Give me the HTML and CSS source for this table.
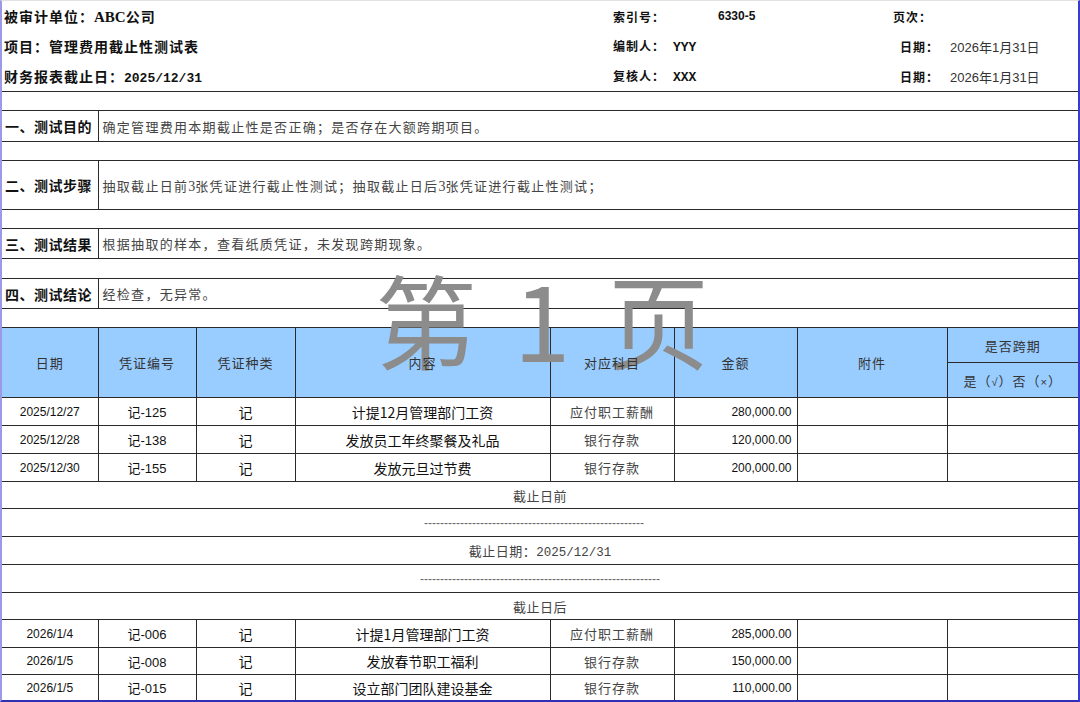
FILE: index.html
```html
<!DOCTYPE html>
<html lang="zh-CN">
<head>
<meta charset="utf-8">
<title>管理费用截止性测试表</title>
<link rel="stylesheet" href="styles.css">
</head>
<body>
<div class="sheet">
  <header class="meta">
    <div class="m-left">被审计单位：<span class="lat">ABC</span>公司</div>
    <div class="m-lab">索引号：</div>
    <div class="m-idx">6330-5</div>
    <div class="m-lab">页次：</div>
    <div></div>

    <div class="m-left">项目：管理费用截止性测试表</div>
    <div class="m-lab span2">编制人：<span class="mono">YYY</span></div>
    <div class="m-lab m-lab-d">日期：</div>
    <div class="m-date">2026年1月31日</div>

    <div class="m-left">财务报表截止日：<span class="mono">2025/12/31</span></div>
    <div class="m-lab span2">复核人：<span class="mono">XXX</span></div>
    <div class="m-lab m-lab-d">日期：</div>
    <div class="m-date">2026年1月31日</div>
  </header>

  <table class="grid">
    <colgroup>
      <col class="c1"><col class="c2"><col class="c3"><col class="c4">
      <col class="c5"><col class="c6"><col class="c7"><col class="c8">
    </colgroup>
    <tbody>
      <tr class="gap r19"><td colspan="8"></td></tr>
      <tr class="sec r31"><th class="sec-lab">一、测试目的</th><td colspan="7" class="sec-txt">确定管理费用本期截止性是否正确；是否存在大额跨期项目。</td></tr>
      <tr class="gap r19"><td colspan="8"></td></tr>
      <tr class="sec r49"><th class="sec-lab">二、测试步骤</th><td colspan="7" class="sec-txt">抽取截止日前<span class="num">3</span>张凭证进行截止性测试；抽取截止日后<span class="num">3</span>张凭证进行截止性测试；</td></tr>
      <tr class="gap r19"><td colspan="8"></td></tr>
      <tr class="sec r30"><th class="sec-lab">三、测试结果</th><td colspan="7" class="sec-txt">根据抽取的样本，查看纸质凭证，未发现跨期现象。</td></tr>
      <tr class="gap r20"><td colspan="8"></td></tr>
      <tr class="sec r30"><th class="sec-lab">四、测试结论</th><td colspan="7" class="sec-txt">经检查，无异常。</td></tr>
      <tr class="gap r19"><td colspan="8"></td></tr>

      <tr class="head r35">
        <th rowspan="2"><span class="ht">日期</span></th>
        <th rowspan="2"><span class="ht">凭证编号</span></th>
        <th rowspan="2"><span class="ht">凭证种类</span></th>
        <th rowspan="2"><span class="ht">内容</span></th>
        <th rowspan="2"><span class="ht">对应科目</span></th>
        <th rowspan="2"><span class="ht">金额</span></th>
        <th rowspan="2"><span class="ht">附件</span></th>
        <th><span class="ht">是否跨期</span></th>
      </tr>
      <tr class="head r35"><th><span class="ht">是（<span class="chk">√</span>）否（<span class="chk">×</span>）</span></th></tr>

      <tr class="data r28">
        <td class="d-date">2025/12/27</td><td class="d-no">记-125</td><td class="d-kind">记</td>
        <td class="d-text">计提12月管理部门工资</td><td class="d-acct">应付职工薪酬</td>
        <td class="d-amt">280,000.00</td><td></td><td></td>
      </tr>
      <tr class="data r28">
        <td class="d-date">2025/12/28</td><td class="d-no">记-138</td><td class="d-kind">记</td>
        <td class="d-text">发放员工年终聚餐及礼品</td><td class="d-acct">银行存款</td>
        <td class="d-amt">120,000.00</td><td></td><td></td>
      </tr>
      <tr class="data r28">
        <td class="d-date">2025/12/30</td><td class="d-no">记-155</td><td class="d-kind">记</td>
        <td class="d-text">发放元旦过节费</td><td class="d-acct">银行存款</td>
        <td class="d-amt">200,000.00</td><td></td><td></td>
      </tr>

      <tr class="mid r27"><td colspan="8">截止日前</td></tr>
      <tr class="mid dash r28"><td colspan="8">-------------------------------------------------------</td></tr>
      <tr class="mid r28"><td colspan="8">截止日期：<span class="mono-n">2025/12/31</span></td></tr>
      <tr class="mid dash dash2 r28"><td colspan="8">------------------------------------------------------------</td></tr>
      <tr class="mid r27"><td colspan="8">截止日后</td></tr>

      <tr class="data r28">
        <td class="d-date">2026/1/4</td><td class="d-no">记-006</td><td class="d-kind">记</td>
        <td class="d-text">计提1月管理部门工资</td><td class="d-acct">应付职工薪酬</td>
        <td class="d-amt">285,000.00</td><td></td><td></td>
      </tr>
      <tr class="data r27">
        <td class="d-date">2026/1/5</td><td class="d-no">记-008</td><td class="d-kind">记</td>
        <td class="d-text">发放春节职工福利</td><td class="d-acct">银行存款</td>
        <td class="d-amt">150,000.00</td><td></td><td></td>
      </tr>
      <tr class="data r26">
        <td class="d-date">2026/1/5</td><td class="d-no">记-015</td><td class="d-kind">记</td>
        <td class="d-text">设立部门团队建设基金</td><td class="d-acct">银行存款</td>
        <td class="d-amt">110,000.00</td><td></td><td></td>
      </tr>
    </tbody>
  </table>

  <div class="watermark">第 1 页</div>
</div>
</body>
</html>
```

FILE: styles.css
```css
* { box-sizing: border-box; }

html, body {
  margin: 0;
  padding: 0;
  background: #ffffff;
}

body {
  font-family: "Noto Sans CJK SC", sans-serif;
  color: #222;
}

.sheet {
  position: relative;
  width: 1080px;
  height: 702px;
  border-top: 1px solid #e2e2e2;
  border-left: 2px solid #9a9ae6;
  border-right: 2px solid #3a3acc;
  border-bottom: 2px solid #3030b4;
  overflow: hidden;
}

/* ---------- top meta block ---------- */
.meta {
  display: grid;
  grid-template-columns: 611px 105px 175px 57px 1fr;
  grid-auto-rows: 30px;
  align-items: center;
}

.m-left {
  padding-left: 2px;
  font-size: 14px;
  font-weight: 700;
  letter-spacing: 1px;
  color: #111;
  white-space: nowrap;
}

.m-left .lat {
  font-family: "Liberation Serif", serif;
  font-size: 15px;
  letter-spacing: 0;
}

.mono {
  font-family: "Liberation Mono", monospace;
  font-weight: 700;
  font-size: 13px;
  letter-spacing: 0;
}

.m-lab {
  font-size: 12px;
  font-weight: 700;
  letter-spacing: 1px;
  color: #111;
  white-space: nowrap;
}

.m-lab .mono { margin-left: 8px; }

.m-lab-d { padding-left: 7px; }

.span2 { grid-column: span 2; }

.m-idx {
  font-family: "Liberation Sans Narrow", "Liberation Sans", sans-serif;
  font-weight: 700;
  font-size: 12px;
  color: #111;
}

.m-date {
  font-family: "Liberation Sans", "Noto Sans CJK SC", sans-serif;
  font-size: 13px;
  color: #333;
  white-space: nowrap;
}

/* ---------- grid table ---------- */
.grid {
  width: 1076px;
  border-collapse: collapse;
  table-layout: fixed;
}

.c1 { width: 96px; }
.c2 { width: 98px; }
.c3 { width: 99px; }
.c4 { width: 255px; }
.c5 { width: 124px; }
.c6 { width: 123px; }
.c7 { width: 150px; }
.c8 { width: 131px; }

.grid td,
.grid th {
  border: 1px solid #2a2a2a;
  padding: 0;
  white-space: nowrap;
  overflow: hidden;
}

.grid tr > :first-child { border-left: none; }
.grid tr > :last-child { border-right: none; }

.r19 > * { height: 19px; }
.r20 > * { height: 20px; }
.r26 > * { height: 26px; }
.r27 > * { height: 27px; }
.r28 > * { height: 28px; }
.r30 > * { height: 30px; }
.r31 > * { height: 31px; }
.r35 > * { height: 35px; }
.r49 > * { height: 49px; }

.gap td {
  border-left: none;
  border-right: none;
}

/* sections */
.sec-lab {
  text-align: left;
  padding-left: 3px !important;
  font-size: 14px;
  font-weight: 700;
  letter-spacing: 0.5px;
  color: #111;
}

.sec-txt {
  padding-left: 4px !important;
  font-size: 13px;
  letter-spacing: 1.3px;
  color: #444;
}

.num {
  font-family: "Liberation Serif", serif;
  font-size: 14px;
  letter-spacing: 0;
}

/* header of the voucher table */
.head th {
  background: #99ccff;
  font-weight: 400;
  font-size: 13px;
  letter-spacing: 1px;
  color: #333;
  text-align: center;
}

.ht {
  position: relative;
  z-index: 2;
}

.chk {
  font-family: "Liberation Sans", sans-serif;
  font-size: 11px;
}

/* data rows */
.data td { text-align: center; color: #111; }

.d-date {
  font-family: "Liberation Sans", sans-serif;
  font-size: 12px;
}

.d-no {
  font-family: "Liberation Sans", "Noto Sans CJK SC", sans-serif;
  font-size: 13px;
}

.d-kind { font-size: 14px; }

.d-text { font-size: 14px; }

.d-acct {
  font-size: 13px;
  letter-spacing: 1px;
  color: #444 !important;
}

.data .d-amt {
  text-align: right;
  padding-right: 5px;
  font-family: "Liberation Sans", sans-serif;
  font-size: 12px;
}

/* middle rows */
.mid td {
  text-align: center;
  font-size: 13px;
  letter-spacing: 0.5px;
  color: #444;
}

.mono-n {
  font-family: "Liberation Mono", monospace;
  font-size: 12.5px;
  letter-spacing: 0;
}

.dash td {
  font-family: "Liberation Sans", sans-serif;
  font-size: 12px;
  letter-spacing: 0;
  color: #666;
  padding-right: 12px;
}

.dash2 td { padding-right: 0; }

/* page watermark overlay */
.watermark {
  position: absolute;
  left: 373px;
  top: 266px;
  z-index: 1;
  font-size: 102px;
  line-height: 1;
  color: #8c8c8c;
  word-spacing: 14px;
  white-space: nowrap;
  pointer-events: none;
}
```
